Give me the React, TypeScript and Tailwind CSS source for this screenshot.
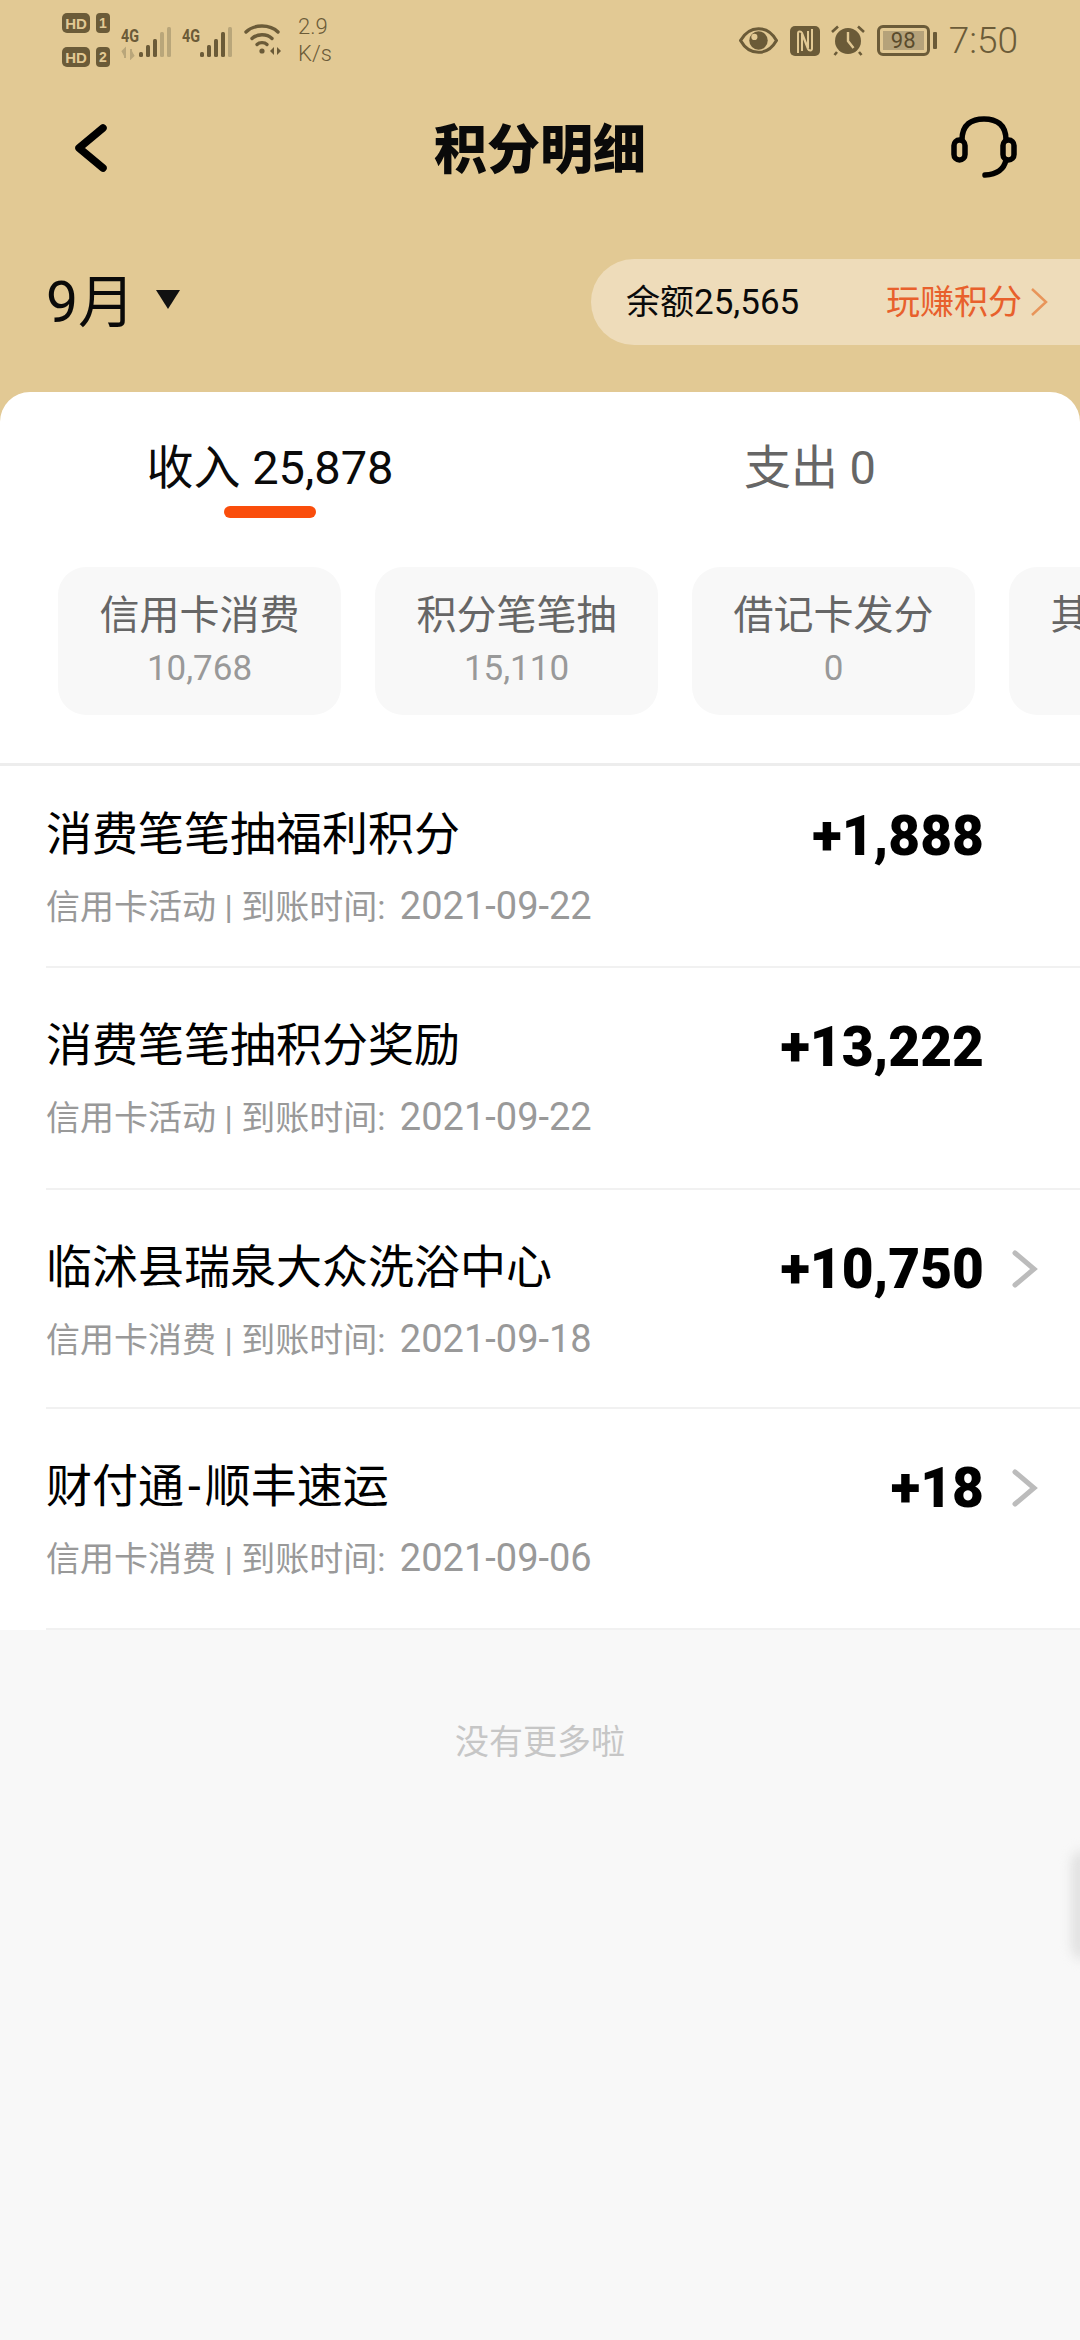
import { ReactNode } from "react"

const statusColor = "#6b5b38"

const chips = [
  { label: "信用卡消费", value: "10,768" },
  { label: "积分笔笔抽", value: "15,110" },
  { label: "借记卡发分", value: "0" },
  { label: "其他渠道分", value: "0" },
]

type Row = {
  title: ReactNode
  sub: string
  date: string
  amount: string
  more: boolean
  box: string
}

const rows: Row[] = [
  { title: "消费笔笔抽福利积分", sub: "信用卡活动 | 到账时间:", date: "2021-09-22", amount: "+1,888", more: false, box: "h-[202px] pt-[40px]" },
  { title: "消费笔笔抽积分奖励", sub: "信用卡活动 | 到账时间:", date: "2021-09-22", amount: "+13,222", more: false, box: "h-[222px] pt-[49px]" },
  { title: "临沭县瑞泉大众洗浴中心", sub: "信用卡消费 | 到账时间:", date: "2021-09-18", amount: "+10,750", more: true, box: "h-[219px] pt-[49px]" },
  {
    title: (
      <>
        财付通<span className="mx-[4px]">-</span>顺丰速运
      </>
    ),
    sub: "信用卡消费 | 到账时间:",
    date: "2021-09-06",
    amount: "+18",
    more: true,
    box: "h-[221px] pt-[49px]",
  },
]

const SimBadge = ({ n }: { n: string }) => (
  <div className="flex items-center gap-[6px] font-['Liberation_Sans'] font-bold text-[#e2c994]">
    <span className="flex h-[20px] w-[28px] items-center justify-center rounded-[5px] bg-[#6b5b38] text-[15px] leading-none">HD</span>
    <span className="flex h-[20px] w-[14px] items-center justify-center rounded-[4px] bg-[#6b5b38] text-[14px] leading-none">{n}</span>
  </div>
)

const Signal = ({ strong, arrows }: { strong: number; arrows?: boolean }) => (
  <svg width="52" height="34" viewBox="0 0 52 34">
    <text x="0" y="16" fontSize="18" fontWeight="700" fontFamily="Roboto" textLength="18" lengthAdjust="spacingAndGlyphs" fill={statusColor}>4G</text>
    {arrows && <path d="M4 32V23M1 26l3-3v9M10 23v9l3-3" stroke="#b9a67a" strokeWidth="2" fill="#b9a67a" />}
    {[
      { x: 18, y: 26, h: 5 },
      { x: 25, y: 19, h: 12 },
      { x: 32, y: 13, h: 18 },
      { x: 39, y: 6, h: 25 },
      { x: 46, y: 1, h: 30 },
    ].map((b, i) => (
      <rect key={b.x} x={b.x} y={b.y} width="4" height={b.h} rx="1.5" fill={i < strong ? statusColor : "#b9a67a"} />
    ))}
  </svg>
)

const Wifi = () => (
  <svg width="38" height="32" viewBox="0 0 38 32" fill="none" stroke={statusColor} strokeWidth="3.4" strokeLinecap="round">
    <path d="M2 9C10 1 26 1 34 9" />
    <path d="M8 15.5C13 10.5 23 10.5 28 15.5" />
    <path d="M13 21.5C15.5 19 20.5 19 23 21.5" />
    <circle cx="18" cy="28" r="2.6" fill={statusColor} stroke="none" />
    <path d="M30 24l-4 4 4 4zM33 24l4 4-4 4z" fill={statusColor} stroke="none" />
  </svg>
)

const Eye = () => (
  <svg width="39" height="27" viewBox="0 0 38 26">
    <path d="M1.5 13C6 5 12 1.5 19 1.5S32 5 36.5 13C32 21 26 24.5 19 24.5S6 21 1.5 13Z" fill="none" stroke={statusColor} strokeWidth="3" />
    <circle cx="19" cy="13" r="9" fill={statusColor} />
    <circle cx="15" cy="9.5" r="3" fill="#e2c994" />
  </svg>
)

const Nfc = () => (
  <svg width="30" height="30" viewBox="0 0 30 30">
    <rect x="0" y="0" width="30" height="30" rx="5" fill={statusColor} />
    <path d="M8 27V7.5C8 5 11 5 12 7L18 22V5M22 3V22.5C22 25 19 25 18 23L12 8V25" fill="none" stroke="#e2c994" strokeWidth="2" />
  </svg>
)

const Alarm = () => (
  <svg width="34" height="31" viewBox="0 0 34 31" fill="none">
    <circle cx="17" cy="16" r="13" fill={statusColor} />
    <path d="M17 7V16L22.5 23" stroke="#e2c994" strokeWidth="2.4" />
    <path d="M1 7L7 1.5M33 7L27 1.5M6 27L3.5 30M28 27L30.5 30" stroke={statusColor} strokeWidth="2.6" />
  </svg>
)

const Battery = () => (
  <div className="flex items-center gap-[3px]">
    <div className="flex h-[31px] w-[53px] items-center justify-center rounded-[6px] border-[3px] border-[#6b5b38] p-[3px]">
      <span className="flex h-full w-full items-center justify-center bg-[#b5a27a] text-[22px] leading-none text-[#5a4b2c]">98</span>
    </div>
    <span className="h-[17px] w-[4px] rounded-[1px] bg-[#6b5b38]" />
  </div>
)

const StatusBar = () => (
  <div className="flex h-[80px] items-center justify-between pl-[62px] pr-[62px] text-[#6b5b38]">
    <div className="flex items-center">
      <div className="flex flex-col gap-[14px]">
        <SimBadge n="1" />
        <SimBadge n="2" />
      </div>
      <div className="ml-[11px] mt-[6px]"><Signal strong={3} arrows /></div>
      <div className="ml-[9px] mt-[6px]"><Signal strong={4} /></div>
      <div className="ml-[10px] mt-[-2px]"><Wifi /></div>
      <div className="ml-[16px] text-[22px] font-light leading-[27px]">
        <div>2.9</div>
        <div>K/s</div>
      </div>
    </div>
    <div className="mt-[1px] flex items-center">
      <Eye />
      <div className="ml-[12px]"><Nfc /></div>
      <div className="ml-[11px]"><Alarm /></div>
      <div className="ml-[12px]"><Battery /></div>
      <span className="ml-[12px] text-[37px] font-light leading-none">7:50</span>
    </div>
  </div>
)

const Headset = () => (
  <svg className="mb-[6px]" width="68" height="62" viewBox="0 0 68 62" fill="none" stroke="#000" strokeWidth="5.5" strokeLinecap="round">
    <rect x="4" y="24" width="11" height="20" rx="5.5" />
    <rect x="53" y="24" width="11" height="20" rx="5.5" />
    <path d="M12 24C12 8 22 3 34 3S56 8 56 24" />
    <path d="M56 44Q53 58 35 59" />
  </svg>
)

const Chevron = () => (
  <svg width="26" height="40" viewBox="0 0 26 40" fill="none" stroke="#bcbcbc" strokeWidth="5" strokeLinecap="round">
    <path d="M3 4L22 20L3 36" />
  </svg>
)

export default function App() {
  return (
    <div className="relative h-[2340px] w-[1080px] overflow-hidden bg-[#f8f8f8] font-['Roboto','Noto_Sans_CJK_SC',sans-serif]">
      <div className="bg-[#e2c994]">
        <StatusBar />

        <div className="grid h-[140px] grid-cols-[1fr_auto_1fr] items-center">
          <div className="pl-[74px]">
            <svg className="mb-[4px]" width="34" height="48" viewBox="0 0 34 48" fill="none" stroke="#000" strokeWidth="7.5" strokeLinecap="round" strokeLinejoin="round">
              <path d="M29 4L5 24L29 44" />
            </svg>
          </div>
          <h1 className="mt-[2px] text-[53px] font-black leading-none text-[#0a0a0a]">积分明细</h1>
          <div className="flex justify-end pr-[62px]">
            <Headset />
          </div>
        </div>

        <div className="flex h-[172px] items-start justify-between pt-[39px]">
          <div className="flex h-[86px] items-center pl-[46px]">
            <span className="text-[57px] leading-none text-[#0a0a0a]">9月</span>
            <svg className="ml-[21px] mb-[6px]" width="24" height="19" viewBox="0 0 24 19">
              <path d="M0 0H24L12 19Z" fill="#111" />
            </svg>
          </div>
          <div className="flex h-[86px] w-[489px] items-center rounded-l-full bg-[#eedcba] pl-[35px]">
            <span className="w-[260px] text-[34px] leading-none text-[#0a0a0a]">
              余额<span className="text-[35px]">25,565</span>
            </span>
            <span className="text-[34px] leading-none text-[#e8602c]">玩赚积分</span>
            <svg className="ml-[8px]" width="18" height="30" viewBox="0 0 18 30" fill="none" stroke="#e8955a" strokeWidth="2.5">
              <path d="M2 2L16 15L2 28" />
            </svg>
          </div>
        </div>

        <div className="overflow-hidden rounded-t-[30px] bg-white">
          <div className="grid grid-cols-2 pt-[48px]">
            <div className="flex flex-col items-center">
              <span className="whitespace-pre text-[47px] leading-[56px] text-[#0a0a0a]">收入 25,878</span>
              <span className="mt-[10px] h-[12px] w-[92px] rounded-full bg-[#fa4d0b]" />
            </div>
            <span className="whitespace-pre text-center text-[47px] leading-[56px] text-[#666]">支出 0</span>
          </div>

          <div className="mt-[49px] flex gap-[34px] pl-[58px]">
            {chips.map((chip) => (
              <div key={chip.label} className="flex h-[148px] w-[283px] shrink-0 flex-col items-center rounded-[28px] bg-[#f8f8f8] pt-[25px]">
                <span className="text-[40px] leading-[48px] text-[#666]">{chip.label}</span>
                <span className="mt-[8px] text-[35px] leading-[42px] text-[#999]">{chip.value}</span>
              </div>
            ))}
          </div>

          <div className="mt-[48px] h-[3px] bg-[#ededed]" />

          <div className="pl-[46px]">
            {rows.map((row) => (
              <div key={row.amount} className={`flex items-start border-b-2 border-[#f1f1f1] ${row.box}`}>
                <div className="flex-1">
                  <div className="text-[46px] leading-[56px] text-black">{row.title}</div>
                  <div className="mt-[22px] whitespace-pre text-[34px] leading-[44px] text-[#999]">
                    {row.sub} <span className="ml-[6px] text-[38px]">{row.date}</span>
                  </div>
                </div>
                <span className="text-[55px] font-black leading-[60px] text-black">{row.amount}</span>
                <div className="flex h-[60px] w-[96px] items-center pl-[28px]">
                  {row.more && <Chevron />}
                </div>
              </div>
            ))}
          </div>
        </div>
      </div>

      <p className="mt-[90px] text-center text-[34px] leading-[44px] text-[#c6c6c6]">没有更多啦</p>

      {/* soft edge of the floating button on the right */}
      <div className="absolute right-[-6px] top-[1850px] h-[110px] w-[14px] rounded-l-full bg-[#dedede] blur-[6px]" />
    </div>
  )
}
